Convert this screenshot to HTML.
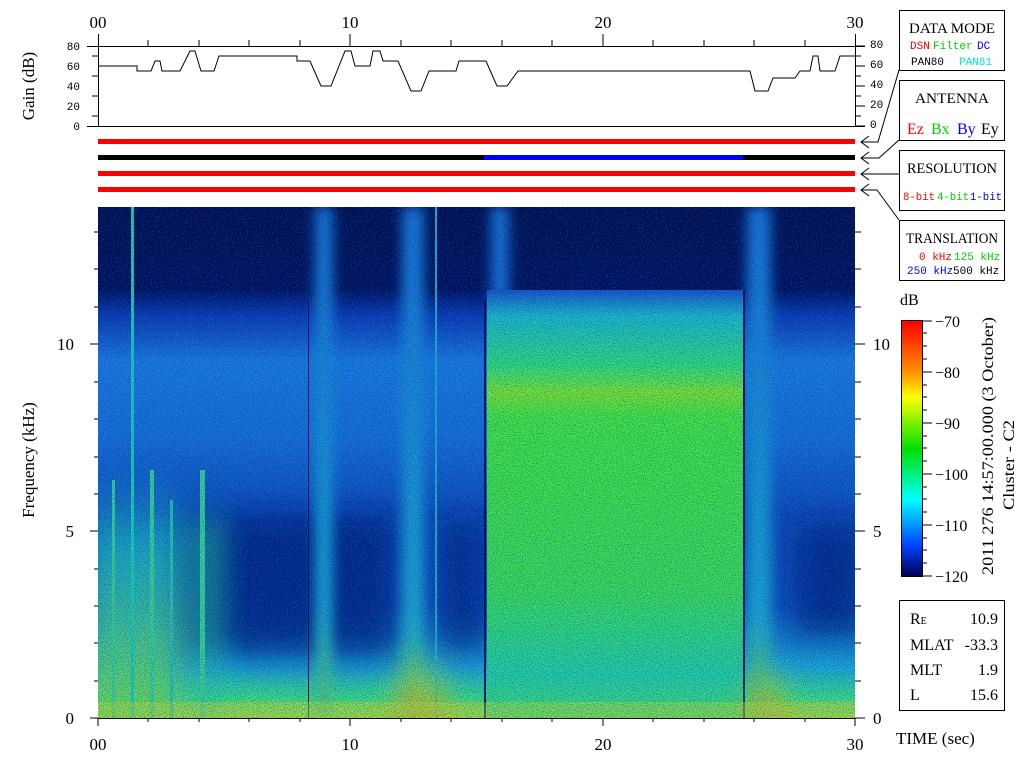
<!DOCTYPE html>
<html><head><meta charset="utf-8"><style>
html,body{margin:0;padding:0;background:#fff;width:1024px;height:768px;overflow:hidden}
svg{display:block}
.s{font-family:"Liberation Serif",serif}
.m{font-family:"Liberation Mono",monospace}
</style></head><body>
<svg width="1024" height="768" viewBox="0 0 1024 768" xmlns="http://www.w3.org/2000/svg">
<defs>
<clipPath id="cp"><rect x="98" y="207" width="757" height="511"/></clipPath>
<linearGradient id="bg" x1="0" y1="0" x2="0" y2="1">
<stop offset="0" stop-color="#000848"/>
<stop offset="0.16" stop-color="#000a55"/>
<stop offset="0.21" stop-color="#0c34b0"/>
<stop offset="0.3" stop-color="#1e78e0"/>
<stop offset="0.45" stop-color="#1a6cd8"/>
<stop offset="0.6" stop-color="#1048b8"/>
<stop offset="0.78" stop-color="#1050c0"/>
<stop offset="0.9" stop-color="#20a8d8"/>
<stop offset="0.96" stop-color="#40e080"/>
<stop offset="1" stop-color="#a0e040"/>
</linearGradient>
<linearGradient id="gr" x1="0" y1="0" x2="0" y2="1">
<stop offset="0" stop-color="#1a50c8"/>
<stop offset="0.06" stop-color="#20b8c8"/>
<stop offset="0.18" stop-color="#38e070"/>
<stop offset="0.24" stop-color="#80e828"/>
<stop offset="0.3" stop-color="#48e838"/>
<stop offset="0.7" stop-color="#40e050"/>
<stop offset="0.9" stop-color="#28d0a0"/>
<stop offset="1" stop-color="#48e068"/>
</linearGradient>
<linearGradient id="col" x1="0" y1="0" x2="0" y2="1">
<stop offset="0" stop-color="#1a70d8"/>
<stop offset="0.8" stop-color="#20a8d0"/>
<stop offset="1" stop-color="#60d060"/>
</linearGradient>
<linearGradient id="lft" x1="0" y1="0" x2="0" y2="1">
<stop offset="0" stop-color="#20b0d0" stop-opacity="0"/>
<stop offset="0.3" stop-color="#20c0c0" stop-opacity="0.8"/>
<stop offset="1" stop-color="#80e040"/>
</linearGradient>
<linearGradient id="cb" x1="0" y1="0" x2="0" y2="1">
<stop offset="0" stop-color="#ff0000"/>
<stop offset="0.2" stop-color="#ff9000"/>
<stop offset="0.3" stop-color="#ffff00"/>
<stop offset="0.5" stop-color="#00e000"/>
<stop offset="0.7" stop-color="#00ffff"/>
<stop offset="0.88" stop-color="#0040ff"/>
<stop offset="1" stop-color="#000050"/>
</linearGradient>
<linearGradient id="hot" x1="0" y1="0" x2="0" y2="1">
<stop offset="0" stop-color="#80e040" stop-opacity="0"/>
<stop offset="0.5" stop-color="#c0e020" stop-opacity="0.8"/>
<stop offset="1" stop-color="#f08000"/>
</linearGradient>
<filter id="bl" x="-20%" y="-20%" width="140%" height="140%"><feGaussianBlur stdDeviation="14"/></filter>
<filter id="bl2" x="-20%" y="-20%" width="140%" height="140%"><feGaussianBlur stdDeviation="6"/></filter>
<filter id="nz" x="0" y="0" width="1" height="1">
<feTurbulence type="fractalNoise" baseFrequency="0.9" numOctaves="1" seed="3"/>
<feColorMatrix values="0 0 0 0 0  0 0 0 0 0.03  0 0 0 0 0.3  0 0 0 -2.4 1.4"/>
</filter>
<filter id="nz2" x="0" y="0" width="1" height="1">
<feTurbulence type="fractalNoise" baseFrequency="0.8" numOctaves="1" seed="9"/>
<feColorMatrix values="0 0 0 0 0  0 0 0 0 0.9  0 0 0 0 0.95  0 0 0 -2.6 1.35"/>
</filter>
</defs>

<g clip-path="url(#cp)">
<rect x="98" y="207" width="757" height="511" fill="url(#bg)"/>
<g filter="url(#bl)">
<rect x="180" y="515" width="215" height="140" fill="#051a78" opacity="0.8"/>
<rect x="440" y="520" width="45" height="130" fill="#051a78" opacity="0.75"/>
<rect x="795" y="525" width="70" height="110" fill="#051a78" opacity="0.75"/>
<rect x="85" y="470" width="93" height="260" fill="url(#lft)"/>
<rect x="195" y="520" width="20" height="198" fill="#30c8a0" opacity="0.7"/>
</g>
<g filter="url(#bl2)">
<rect x="315" y="207" width="18" height="511" fill="url(#col)"/>
<rect x="402" y="207" width="22" height="511" fill="url(#col)"/>
<rect x="747" y="207" width="24" height="511" fill="url(#col)"/>
<rect x="491" y="207" width="18" height="90" fill="#1a70d8"/>
</g>
<rect x="487" y="290" width="258" height="428" fill="url(#gr)"/>
<rect x="131" y="207" width="3" height="511" fill="#20d0b0"/>
<rect x="112" y="480" width="3" height="238" fill="#40d090"/>
<rect x="150" y="470" width="4" height="248" fill="#40d090"/>
<rect x="170" y="500" width="3" height="218" fill="#30c0b0"/>
<rect x="200" y="470" width="5" height="248" fill="#40d090"/>
<rect x="435" y="207" width="2" height="511" fill="#20b0c8"/>
<rect x="308" y="300" width="1" height="418" fill="#000a55"/>
<rect x="484" y="300" width="2" height="418" fill="#000a55"/>
<rect x="743" y="290" width="2" height="428" fill="#000a55"/>
<g filter="url(#bl)" opacity="0.9">
<rect x="395" y="650" width="50" height="80" fill="url(#hot)"/>
<rect x="750" y="660" width="35" height="70" fill="url(#hot)"/>
</g>
<rect x="98" y="702" width="757" height="16" fill="#c0e030" opacity="0.45"/>
<rect x="98" y="207" width="757" height="511" filter="url(#nz2)" opacity="0.35"/>
<rect x="98" y="207" width="757" height="511" filter="url(#nz)" opacity="0.6"/>
</g>

<g stroke="#000" stroke-width="1" fill="none">
<line x1="98" y1="718.5" x2="855" y2="718.5"/>
<path d="M98 718v8M350 718v8M603 718v8M855 718v8M148 718v4M199 718v4M249 718v4M300 718v4M401 718v4M451 718v4M502 718v4M552 718v4M653 718v4M704 718v4M754 718v4M805 718v4"/>
<path d="M855 718h10M855 531h10M855 344h10M855 681h6M855 643h6M855 606h6M855 569h6M855 494h6M855 457h6M855 419h6M855 382h6M855 307h6M855 269h6M855 232h6"/>
<path d="M98 718h-8M98 531h-8M98 344h-8M98 681h-4M98 643h-4M98 606h-4M98 569h-4M98 494h-4M98 457h-4M98 419h-4M98 382h-4M98 307h-4M98 269h-4M98 232h-4"/>
</g>
<g class="s" font-size="17" fill="#000">
<text x="98" y="750" text-anchor="middle">00</text>
<text x="350" y="750" text-anchor="middle">10</text>
<text x="603" y="750" text-anchor="middle">20</text>
<text x="855" y="750" text-anchor="middle">30</text>
<text x="98" y="28" text-anchor="middle">00</text>
<text x="350" y="28" text-anchor="middle">10</text>
<text x="603" y="28" text-anchor="middle">20</text>
<text x="855" y="28" text-anchor="middle">30</text>
<text x="74" y="724" text-anchor="end">0</text>
<text x="74" y="537" text-anchor="end">5</text>
<text x="74" y="350" text-anchor="end">10</text>
<text x="873" y="724">0</text>
<text x="873" y="537">5</text>
<text x="873" y="350">10</text>
<text x="34" y="460" transform="rotate(-90 34 460)" text-anchor="middle">Frequency (kHz)</text>
<text x="34" y="86" transform="rotate(-90 34 86)" text-anchor="middle">Gain (dB)</text>
<text x="896" y="744">TIME (sec)</text>
</g>

<g stroke="#000" fill="none" stroke-width="1">
<line x1="87" y1="46.5" x2="865" y2="46.5"/>
<line x1="87" y1="126.5" x2="865" y2="126.5"/>
<line x1="98.5" y1="34" x2="98.5" y2="127"/>
<line x1="855.5" y1="34" x2="855.5" y2="127"/>
<path d="M148 40v6M199 40v6M249 40v6M300 40v6M350 34v12M401 40v6M451 40v6M502 40v6M552 40v6M603 34v12M653 40v6M704 40v6M754 40v6M805 40v6"/>
<path d="M92 56h6M92 76h6M92 96h6M92 116h6M855 56h6M855 76h6M855 96h6M855 116h6M855 46h10M855 66h10M855 86h10M855 106h10M855 126h10"/>
<polyline points="98,66 137,66 137,71 151,71 155,61 160,61 162,71 180,71 190,51 195,51 201,71 214,71 219,56 297,56 297,61 310,61 321,86 331,86 345,51 351,51 355,66 370,66 373,51 380,51 383,61 398,61 411,91 421,91 429,71 456,71 459,61 486,61 497,86 507,86 518,71 525,71 750,71 755,91 768,91 773,78 795,78 800,71 810,71 813,56 818,56 820,71 835,71 840,56 855,56"/>
</g>
<g class="m" font-size="11" fill="#000">
<text x="80" y="50" text-anchor="end">80</text>
<text x="80" y="70" text-anchor="end">60</text>
<text x="80" y="90" text-anchor="end">40</text>
<text x="80" y="110" text-anchor="end">20</text>
<text x="80" y="130" text-anchor="end">0</text>
<text x="870" y="48">80</text>
<text x="870" y="68">60</text>
<text x="870" y="88">40</text>
<text x="870" y="108">20</text>
<text x="870" y="128">0</text>
</g>

<rect x="98" y="139" width="757" height="5" fill="#ff0000"/>
<rect x="98" y="155" width="386" height="5" fill="#000"/>
<rect x="484" y="155" width="259" height="5" fill="#0000ff"/>
<rect x="743" y="155" width="112" height="5" fill="#000"/>
<rect x="98" y="171" width="757" height="5" fill="#ff0000"/>
<rect x="98" y="187" width="757" height="5" fill="#ff0000"/>

<g stroke="#000" fill="none" stroke-width="1">
<path d="M869 136l-8 6l8 6M861 142h17l21-72"/>
<path d="M869 152l-8 6l8 6M861 158h18l20-18"/>
<path d="M869 168l-8 6l8 6M861 174h38"/>
<path d="M869 184l-8 6l8 6M861 190h16l22 30"/>
<rect x="899.5" y="10.5" width="105" height="60"/>
<rect x="899.5" y="80.5" width="105" height="60"/>
<rect x="899.5" y="150.5" width="105" height="60"/>
<rect x="899.5" y="220.5" width="105" height="60"/>
<rect x="899.5" y="600.5" width="105" height="110"/>
</g>
<g class="s" font-size="15" fill="#000" text-anchor="middle">
<text x="952" y="33" textLength="86" lengthAdjust="spacingAndGlyphs">DATA MODE</text>
<text x="952" y="103" textLength="74" lengthAdjust="spacingAndGlyphs">ANTENNA</text>
<text x="952" y="173" textLength="90" lengthAdjust="spacingAndGlyphs">RESOLUTION</text>
<text x="952" y="243" textLength="92" lengthAdjust="spacingAndGlyphs">TRANSLATION</text>
</g>
<g class="m" font-size="11">
<text x="910" y="49" fill="#ff0000">DSN</text>
<text x="933" y="49" fill="#00cc00">Filter</text>
<text x="977" y="49" fill="#0000ff">DC</text>
<text x="911" y="65" fill="#000">PAN80</text>
<text x="959" y="65" fill="#00e0e0">PAN81</text>
<text x="903" y="200" fill="#ff0000" textLength="32" lengthAdjust="spacingAndGlyphs">8-bit</text>
<text x="937" y="200" fill="#00cc00" textLength="32" lengthAdjust="spacingAndGlyphs">4-bit</text>
<text x="970" y="200" fill="#0000ff" textLength="32" lengthAdjust="spacingAndGlyphs">1-bit</text>
<text x="919" y="260" fill="#ff0000">0 kHz</text>
<text x="954" y="260" fill="#00cc00">125 kHz</text>
<text x="907" y="274" fill="#0000ff">250 kHz</text>
<text x="953" y="274" fill="#000">500 kHz</text>
</g>
<g class="s" font-size="16">
<text x="907" y="134" fill="#ff0000">Ez</text>
<text x="931" y="134" fill="#00cc00">Bx</text>
<text x="957" y="134" fill="#0000ff">By</text>
<text x="981" y="134" fill="#000">Ey</text>
</g>

<rect x="901.5" y="320.5" width="21" height="256" fill="url(#cb)" stroke="#000"/>
<g stroke="#000"><path d="M922 321h10M922 372h10M922 423h10M922 474h10M922 525h10M922 576h10M922 333h5M922 346h5M922 359h5M922 385h5M922 397h5M922 410h5M922 436h5M922 448h5M922 461h5M922 487h5M922 499h5M922 512h5M922 538h5M922 550h5M922 563h5"/></g>
<g class="s" font-size="16" fill="#000">
<text x="900" y="305">dB</text>
<text x="935" y="327">−70</text>
<text x="935" y="378">−80</text>
<text x="935" y="429">−90</text>
<text x="935" y="480">−100</text>
<text x="935" y="531">−110</text>
<text x="935" y="582">−120</text>
<text transform="translate(993 575) rotate(-90)" textLength="258" lengthAdjust="spacingAndGlyphs">2011 276 14:57:00.000 (3 October)</text>
<text transform="translate(1014 510) rotate(-90)" textLength="90" lengthAdjust="spacingAndGlyphs">Cluster - C2</text>
<text x="910" y="624">R<tspan font-size="10">E</tspan></text>
<text x="998" y="624" text-anchor="end">10.9</text>
<text x="910" y="650">MLAT</text>
<text x="998" y="650" text-anchor="end">-33.3</text>
<text x="910" y="675">MLT</text>
<text x="998" y="675" text-anchor="end">1.9</text>
<text x="910" y="700">L</text>
<text x="998" y="700" text-anchor="end">15.6</text>
</g>
</svg>
</body></html>
